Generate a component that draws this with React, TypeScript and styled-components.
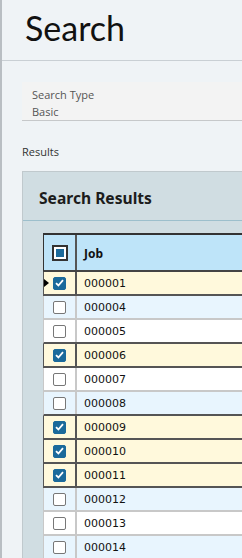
import styled, { createGlobalStyle } from 'styled-components';

const GlobalStyle = createGlobalStyle`
  html, body {
    margin: 0;
    padding: 0;
    background: #b9bec3;
  }
  #root {
    height: 558px;
    overflow: hidden;
  }
`;

const Page = styled.div`
  margin-left: 2px;
  height: 558px;
  background: #eff3f6;
  font-family: 'Open Sans', 'Noto Sans', sans-serif;
  overflow: hidden;
`;

const Header = styled.div`
  height: 61px;
  border-bottom: 1px solid #c9cfd4;
  display: flex;
  align-items: center;
  padding-left: 23px;
  padding-bottom: 5px;
  box-sizing: border-box;
`;

const Title = styled.h1`
  margin: 0;
  font-family: Lato, 'Open Sans', sans-serif;
  font-weight: 400;
  font-size: 34px;
  color: #111;
`;

const Content = styled.div`
  padding-left: 20px;
`;

const FieldBox = styled.div`
  margin-top: 21px;
  height: 39px;
  box-sizing: border-box;
  background: #f3f3f3;
  border-bottom: 1px solid #c6c8ca;
  padding: 4px 0 0 10px;
  font-size: 11px;
  line-height: 17px;
  color: #555;
`;

const SectionLabel = styled.div`
  margin-top: 23px;
  font-size: 11px;
  line-height: 16px;
  color: #333;
`;

const Panel = styled.div`
  margin-top: 11px;
  background: #d0dde2;
  border-top: 1px solid #c0c9cd;
  border-left: 1px solid #c0c9cd;
  height: 400px;
`;

const PanelTitle = styled.div`
  height: 49px;
  box-sizing: border-box;
  border-bottom: 1px solid #9dbfcc;
  display: flex;
  align-items: center;
  padding: 3px 0 0 16px;
  font-family: 'Noto Sans', 'Open Sans', sans-serif;
  font-weight: 700;
  font-size: 15.6px;
  color: #1c1c1c;
`;

const Grid = styled.div`
  margin: 12px 0 0 20px;
  font-family: 'DejaVu Sans', Verdana, sans-serif;
  font-size: 11px;
  color: #111;
`;

const HeaderRow = styled.div`
  display: grid;
  grid-template-columns: 33px 1fr;
  height: 39px;
  box-sizing: border-box;
  border-top: 2px solid #333;
  border-bottom: 2px solid #444;
  border-left: 1px solid #333;
  background: #bee4f9;
`;

const Row = styled.div<{ $bg: string; $dark: boolean; $selected: boolean }>`
  position: relative;
  display: grid;
  grid-template-columns: 33px 1fr;
  height: 24px;
  box-sizing: border-box;
  background: ${(p) => p.$bg};
  border-bottom: 2px solid ${(p) => (p.$dark ? '#555' : '#c8c8c8')};
  border-left: 1px solid ${(p) => (p.$selected ? '#555' : '#c8c8c8')};
`;

const CheckCell = styled.div<{ $dark: boolean }>`
  display: flex;
  align-items: center;
  justify-content: center;
  border-right: 2px solid ${(p) => (p.$dark ? '#555' : '#c8c8c8')};
`;

const TextCell = styled.div<{ $bold?: boolean }>`
  display: flex;
  align-items: center;
  padding-left: 7px;
  padding-top: 1px;
  font-weight: ${(p) => (p.$bold ? 700 : 400)};
  font-family: ${(p) => (p.$bold ? "'Noto Sans', 'Open Sans', sans-serif" : 'inherit')};
  font-size: ${(p) => (p.$bold ? '12px' : '11px')};
`;

const Box = styled.span<{ $checked: boolean }>`
  width: 13px;
  height: 13px;
  box-sizing: border-box;
  border-radius: 2px;
  border: 1px solid ${(p) => (p.$checked ? '#1b6a9b' : '#777')};
  background: ${(p) => (p.$checked ? '#1b6a9b' : '#fff')};
  display: flex;
  align-items: center;
  justify-content: center;
`;

const AllBox = styled.span`
  width: 16px;
  height: 16px;
  box-sizing: border-box;
  border: 2px solid #333;
  background: #fff;
  display: flex;
  align-items: center;
  justify-content: center;
  &::after {
    content: '';
    width: 8px;
    height: 8px;
    background: #1b6a9b;
  }
`;

const Pointer = styled.span`
  position: absolute;
  left: 0;
  top: 7px;
  width: 0;
  height: 0;
  border-top: 4px solid transparent;
  border-bottom: 4px solid transparent;
  border-left: 5px solid #000;
`;

const rows = [
  { job: '000001', checked: true },
  { job: '000004', checked: false },
  { job: '000005', checked: false },
  { job: '000006', checked: true },
  { job: '000007', checked: false },
  { job: '000008', checked: false },
  { job: '000009', checked: true },
  { job: '000010', checked: true },
  { job: '000011', checked: true },
  { job: '000012', checked: false },
  { job: '000013', checked: false },
  { job: '000014', checked: false },
];

const Check = () => (
  <svg width='9' height='8' viewBox='0 0 9 8'>
    <path d='M1 4.2 L3.4 6.5 L8 1.2' fill='none' stroke='#fff' strokeWidth='1.8' />
  </svg>
);

export default function App() {
  return (
    <Page>
      <GlobalStyle />
      <Header>
        <Title>Search</Title>
      </Header>
      <Content>
        <FieldBox>
          <div>Search Type</div>
          <div>Basic</div>
        </FieldBox>
        <SectionLabel>Results</SectionLabel>
        <Panel>
          <PanelTitle>Search Results</PanelTitle>
          <Grid>
            <HeaderRow>
              <CheckCell $dark>
                <AllBox />
              </CheckCell>
              <TextCell $bold>Job</TextCell>
            </HeaderRow>
            {rows.map((row, i) => {
              const next = rows[i + 1];
              const dark = row.checked || (next ? next.checked : false);
              const bg = row.checked ? '#fff9dc' : i % 2 === 1 ? '#e8f5fe' : '#ffffff';
              return (
                <Row key={row.job} $bg={bg} $dark={dark} $selected={row.checked}>
                  {i === 0 && <Pointer />}
                  <CheckCell $dark={row.checked}>
                    <Box $checked={row.checked}>{row.checked && <Check />}</Box>
                  </CheckCell>
                  <TextCell>{row.job}</TextCell>
                </Row>
              );
            })}
          </Grid>
        </Panel>
      </Content>
    </Page>
  );
}
